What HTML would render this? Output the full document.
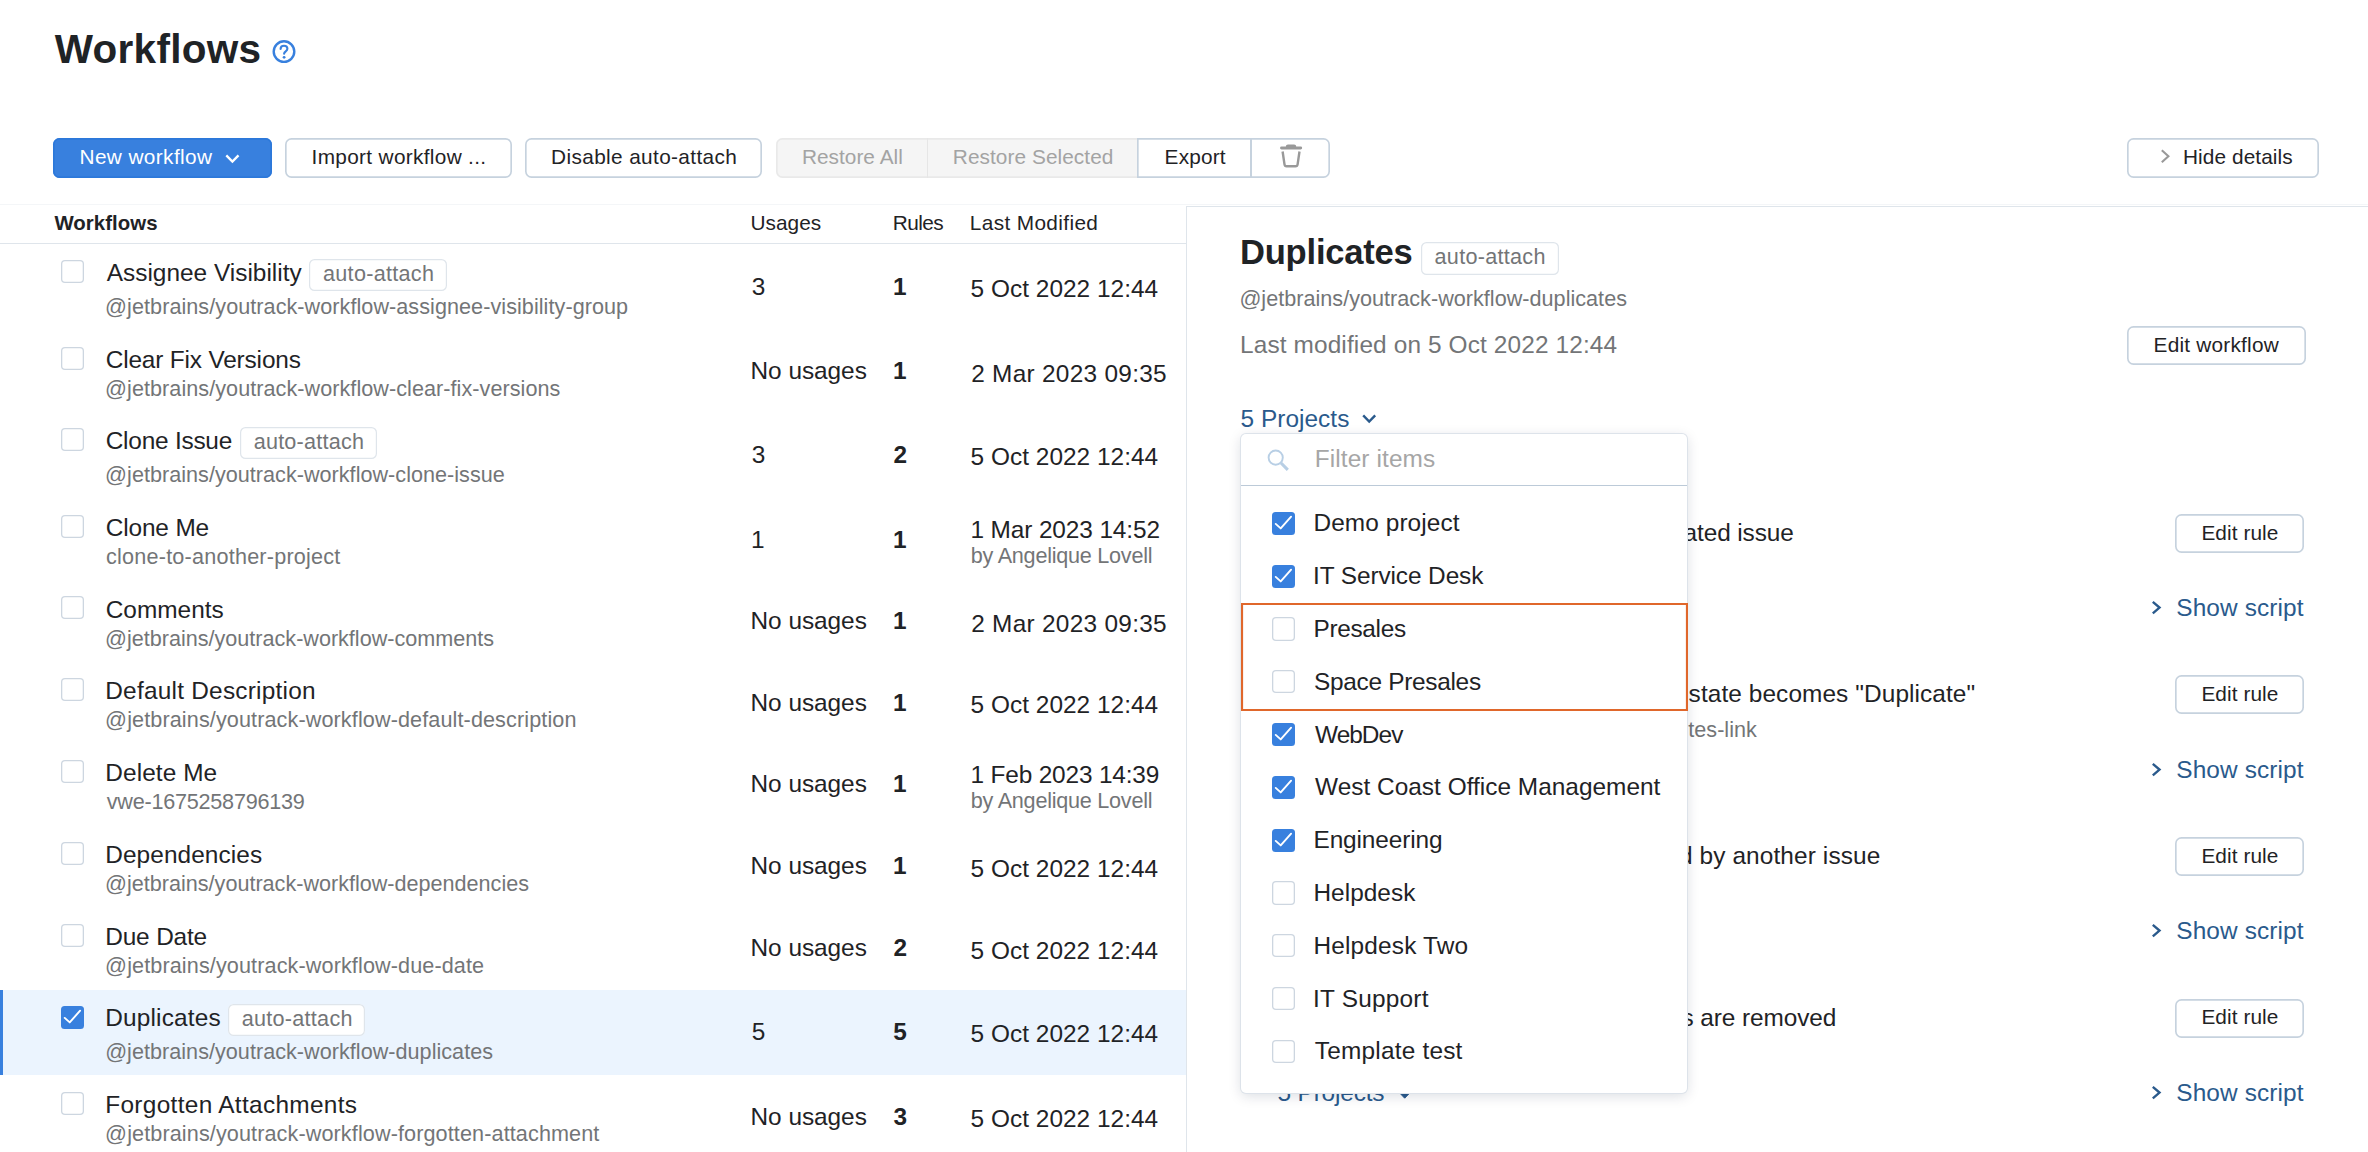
<!DOCTYPE html>
<html><head><meta charset="utf-8"><title>Workflows</title>
<style>
html,body{margin:0;padding:0;background:#fff;}
body{width:2368px;height:1152px;overflow:hidden;position:relative;font-family:"Liberation Sans",sans-serif;}
.t{position:absolute;white-space:nowrap;display:block;}
.b{position:absolute;box-sizing:border-box;display:block;}
</style></head><body>
<span class="t" style="left:54.74px;top:24px;font-size:40.5px;line-height:50px;color:#1f2326;font-weight:bold;letter-spacing:0.291px;">Workflows</span>
<svg class="b" style="left:270.00px;top:38.00px;" width="28" height="28" viewBox="0 0 28 28"><circle cx="14" cy="13.6" r="10.3" fill="none" stroke="#3880de" stroke-width="2.4"/><path d="M10.6 10.9c0-2 1.5-3.2 3.4-3.2s3.4 1.2 3.4 3c0 2.6-3.3 2.6-3.3 5.1" fill="none" stroke="#3880de" stroke-width="2.1" stroke-linecap="round"/><circle cx="14.1" cy="19.3" r="1.4" fill="#3880de"/></svg>
<div class="b" style="left:53.00px;top:138.00px;width:219.00px;height:39.80px;border-radius:6.5px;background:#3880de;box-shadow:inset 0 0 0 1.67px #2c78da;"></div>
<span class="t" style="left:79.48px;top:143px;font-size:20.8px;line-height:27px;color:#fff;letter-spacing:0.392px;">New workflow</span>
<svg class="b" style="left:222.00px;top:150.00px;" width="20" height="16" viewBox="0 0 20 16"><path d="M4.3 5.4l6.1 6.2 6.1-6.2" fill="none" stroke="#fff" stroke-width="2.3"/></svg>
<div class="b" style="left:285.40px;top:138.00px;width:226.30px;height:39.80px;border-radius:6.5px;background:#fff;box-shadow:inset 0 0 0 1.67px #c6d2de;"></div>
<span class="t" style="left:311.60px;top:143px;font-size:20.8px;line-height:27px;color:#1f2326;letter-spacing:0.319px;">Import workflow ...</span>
<div class="b" style="left:525.20px;top:138.00px;width:236.60px;height:39.80px;border-radius:6.5px;background:#fff;box-shadow:inset 0 0 0 1.67px #c6d2de;"></div>
<span class="t" style="left:551.12px;top:143px;font-size:20.8px;line-height:27px;color:#1f2326;letter-spacing:0.361px;">Disable auto-attach</span>
<div class="b" style="left:776.00px;top:138.00px;width:362.50px;height:39.80px;border-radius:6.5px 0 0 6.5px;background:#f5f5f5;box-shadow:inset 0 0 0 1.67px #e9e9e9;"></div>
<div class="b" style="left:926.60px;top:138.00px;width:1.67px;height:39.80px;background:#e6e6e6;"></div>
<span class="t" style="left:801.92px;top:143px;font-size:20.8px;line-height:27px;color:#a3a3a3;letter-spacing:0.035px;">Restore All</span>
<span class="t" style="left:952.82px;top:143px;font-size:20.8px;line-height:27px;color:#a3a3a3;letter-spacing:0.066px;">Restore Selected</span>
<div class="b" style="left:1137.40px;top:138.00px;width:192.60px;height:39.80px;border-radius:0 6.5px 6.5px 0;background:#fff;box-shadow:inset 0 0 0 1.67px #c6d2de;"></div>
<div class="b" style="left:1250.20px;top:138.00px;width:1.67px;height:39.80px;background:#c6d2de;"></div>
<span class="t" style="left:1164.60px;top:143px;font-size:20.8px;line-height:27px;color:#1f2326;letter-spacing:0.172px;">Export</span>
<svg class="b" style="left:1276.00px;top:142.00px;" width="30" height="28" viewBox="0 0 30 28"><path d="M5.5 4.5h19.2a1.2 1.2 0 0 1 0 2.9H5.5a1.2 1.2 0 0 1 0-2.9zM9.8 4.9c.2-1.6.9-2.3 2.2-2.3h6.1c1.3 0 2 .7 2.2 2.3z" fill="#999"/><path d="M6.6 9.5l1.9 12.9c.2 1.4.9 1.9 2.1 1.9h8.9c1.2 0 1.9-.5 2.1-1.9l1.9-12.9" fill="none" stroke="#999" stroke-width="2.4" stroke-linejoin="round"/></svg>
<div class="b" style="left:2127.20px;top:138.00px;width:191.50px;height:39.80px;border-radius:6.5px;background:#fff;box-shadow:inset 0 0 0 1.67px #c6d2de;"></div>
<svg class="b" style="left:2156.00px;top:146.00px;" width="18" height="20" viewBox="0 0 18 20"><path d="M5.8 4.3l6.6 6-6.6 6" fill="none" stroke="#999" stroke-width="2.1"/></svg>
<span class="t" style="left:2182.94px;top:143px;font-size:20.8px;line-height:27px;color:#1f2326;letter-spacing:0.101px;">Hide details</span>
<div class="b" style="left:0.00px;top:204.00px;width:2368.00px;height:1.00px;background:#f4f6f8;"></div>
<span class="t" style="left:54.46px;top:210px;font-size:20.4px;line-height:26px;color:#1f2326;font-weight:bold;letter-spacing:0.040px;">Workflows</span>
<span class="t" style="left:750.54px;top:209px;font-size:20.8px;line-height:27px;color:#1f2326;letter-spacing:0.014px;">Usages</span>
<span class="t" style="left:892.77px;top:209px;font-size:20.8px;line-height:27px;color:#1f2326;letter-spacing:-0.598px;">Rules</span>
<span class="t" style="left:969.77px;top:209px;font-size:20.8px;line-height:27px;color:#1f2326;letter-spacing:0.371px;">Last Modified</span>
<div class="b" style="left:0.00px;top:243.00px;width:1186.50px;height:1.00px;background:#dfe5eb;"></div>
<div class="b" style="left:61.00px;top:260.00px;width:23.00px;height:22.60px;border-radius:4px;background:#fff;box-shadow:inset 0 0 0 1.3px #cdd6e0;"></div>
<span class="t" style="left:106.73px;top:257px;font-size:24.4px;line-height:31px;color:#1f2326;letter-spacing:0.011px;">Assignee Visibility</span>
<div class="b" style="left:309.40px;top:259.00px;width:137.30px;height:32.30px;border-radius:5.5px;background:#fff;box-shadow:inset 0 0 0 1.2px #dfe5eb;"></div>
<span class="t" style="left:323.01px;top:259px;font-size:21.6px;line-height:29px;color:#737577;letter-spacing:0.288px;">auto-attach</span>
<span class="t" style="left:105.12px;top:292px;font-size:21.6px;line-height:29px;color:#737577;letter-spacing:0.057px;">@jetbrains/youtrack-workflow-assignee-visibility-group</span>
<span class="t" style="left:751.75px;top:271px;font-size:24.4px;line-height:31px;color:#1f2326;">3</span>
<span class="t" style="left:892.89px;top:271px;font-size:24.4px;line-height:31px;color:#1f2326;font-weight:bold;">1</span>
<span class="t" style="left:970.57px;top:273px;font-size:24.4px;line-height:31px;color:#1f2326;letter-spacing:0.027px;">5 Oct 2022 12:44</span>
<div class="b" style="left:61.00px;top:347.00px;width:23.00px;height:22.60px;border-radius:4px;background:#fff;box-shadow:inset 0 0 0 1.3px #cdd6e0;"></div>
<span class="t" style="left:105.73px;top:344px;font-size:24.4px;line-height:31px;color:#1f2326;letter-spacing:-0.161px;">Clear Fix Versions</span>
<span class="t" style="left:105.12px;top:374px;font-size:21.6px;line-height:29px;color:#737577;letter-spacing:0.055px;">@jetbrains/youtrack-workflow-clear-fix-versions</span>
<span class="t" style="left:750.55px;top:355px;font-size:24.4px;line-height:31px;color:#1f2326;letter-spacing:-0.040px;">No usages</span>
<span class="t" style="left:892.89px;top:355px;font-size:24.4px;line-height:31px;color:#1f2326;font-weight:bold;">1</span>
<span class="t" style="left:971.16px;top:358px;font-size:24.4px;line-height:31px;color:#1f2326;letter-spacing:0.289px;">2 Mar 2023 09:35</span>
<div class="b" style="left:61.00px;top:428.00px;width:23.00px;height:22.60px;border-radius:4px;background:#fff;box-shadow:inset 0 0 0 1.3px #cdd6e0;"></div>
<span class="t" style="left:105.73px;top:425px;font-size:24.4px;line-height:31px;color:#1f2326;letter-spacing:-0.224px;">Clone Issue</span>
<div class="b" style="left:239.70px;top:427.00px;width:137.30px;height:32.30px;border-radius:5.5px;background:#fff;box-shadow:inset 0 0 0 1.2px #dfe5eb;"></div>
<span class="t" style="left:253.65px;top:427px;font-size:21.6px;line-height:29px;color:#737577;letter-spacing:0.238px;">auto-attach</span>
<span class="t" style="left:105.12px;top:460px;font-size:21.6px;line-height:29px;color:#737577;letter-spacing:0.024px;">@jetbrains/youtrack-workflow-clone-issue</span>
<span class="t" style="left:751.75px;top:439px;font-size:24.4px;line-height:31px;color:#1f2326;">3</span>
<span class="t" style="left:893.48px;top:439px;font-size:24.4px;line-height:31px;color:#1f2326;font-weight:bold;">2</span>
<span class="t" style="left:970.57px;top:441px;font-size:24.4px;line-height:31px;color:#1f2326;letter-spacing:0.027px;">5 Oct 2022 12:44</span>
<div class="b" style="left:61.00px;top:515.00px;width:23.00px;height:22.60px;border-radius:4px;background:#fff;box-shadow:inset 0 0 0 1.3px #cdd6e0;"></div>
<span class="t" style="left:105.73px;top:512px;font-size:24.4px;line-height:31px;color:#1f2326;letter-spacing:-0.132px;">Clone Me</span>
<span class="t" style="left:106.01px;top:542px;font-size:21.6px;line-height:29px;color:#737577;letter-spacing:0.220px;">clone-to-another-project</span>
<span class="t" style="left:750.99px;top:524px;font-size:24.4px;line-height:31px;color:#1f2326;">1</span>
<span class="t" style="left:892.89px;top:524px;font-size:24.4px;line-height:31px;color:#1f2326;font-weight:bold;">1</span>
<span class="t" style="left:970.47px;top:514px;font-size:24.4px;line-height:31px;color:#1f2326;letter-spacing:-0.112px;">1 Mar 2023 14:52</span>
<span class="t" style="left:970.83px;top:541px;font-size:21.6px;line-height:29px;color:#737577;letter-spacing:-0.246px;">by Angelique Lovell</span>
<div class="b" style="left:61.00px;top:596.00px;width:23.00px;height:22.60px;border-radius:4px;background:#fff;box-shadow:inset 0 0 0 1.3px #cdd6e0;"></div>
<span class="t" style="left:105.73px;top:594px;font-size:24.4px;line-height:31px;color:#1f2326;letter-spacing:0.023px;">Comments</span>
<span class="t" style="left:105.12px;top:624px;font-size:21.6px;line-height:29px;color:#737577;letter-spacing:-0.007px;">@jetbrains/youtrack-workflow-comments</span>
<span class="t" style="left:750.55px;top:605px;font-size:24.4px;line-height:31px;color:#1f2326;letter-spacing:-0.040px;">No usages</span>
<span class="t" style="left:892.89px;top:605px;font-size:24.4px;line-height:31px;color:#1f2326;font-weight:bold;">1</span>
<span class="t" style="left:971.16px;top:608px;font-size:24.4px;line-height:31px;color:#1f2326;letter-spacing:0.289px;">2 Mar 2023 09:35</span>
<div class="b" style="left:61.00px;top:678.00px;width:23.00px;height:22.60px;border-radius:4px;background:#fff;box-shadow:inset 0 0 0 1.3px #cdd6e0;"></div>
<span class="t" style="left:105.28px;top:675px;font-size:24.4px;line-height:31px;color:#1f2326;letter-spacing:0.238px;">Default Description</span>
<span class="t" style="left:105.12px;top:705px;font-size:21.6px;line-height:29px;color:#737577;letter-spacing:0.114px;">@jetbrains/youtrack-workflow-default-description</span>
<span class="t" style="left:750.55px;top:687px;font-size:24.4px;line-height:31px;color:#1f2326;letter-spacing:-0.040px;">No usages</span>
<span class="t" style="left:892.89px;top:687px;font-size:24.4px;line-height:31px;color:#1f2326;font-weight:bold;">1</span>
<span class="t" style="left:970.57px;top:689px;font-size:24.4px;line-height:31px;color:#1f2326;letter-spacing:0.027px;">5 Oct 2022 12:44</span>
<div class="b" style="left:61.00px;top:760.00px;width:23.00px;height:22.60px;border-radius:4px;background:#fff;box-shadow:inset 0 0 0 1.3px #cdd6e0;"></div>
<span class="t" style="left:105.28px;top:757px;font-size:24.4px;line-height:31px;color:#1f2326;letter-spacing:0.095px;">Delete Me</span>
<span class="t" style="left:106.76px;top:787px;font-size:21.6px;line-height:29px;color:#737577;letter-spacing:-0.229px;">vwe-1675258796139</span>
<span class="t" style="left:750.55px;top:768px;font-size:24.4px;line-height:31px;color:#1f2326;letter-spacing:-0.040px;">No usages</span>
<span class="t" style="left:892.89px;top:768px;font-size:24.4px;line-height:31px;color:#1f2326;font-weight:bold;">1</span>
<span class="t" style="left:970.47px;top:759px;font-size:24.4px;line-height:31px;color:#1f2326;letter-spacing:-0.159px;">1 Feb 2023 14:39</span>
<span class="t" style="left:970.83px;top:786px;font-size:21.6px;line-height:29px;color:#737577;letter-spacing:-0.246px;">by Angelique Lovell</span>
<div class="b" style="left:61.00px;top:842.00px;width:23.00px;height:22.60px;border-radius:4px;background:#fff;box-shadow:inset 0 0 0 1.3px #cdd6e0;"></div>
<span class="t" style="left:105.28px;top:839px;font-size:24.4px;line-height:31px;color:#1f2326;letter-spacing:0.079px;">Dependencies</span>
<span class="t" style="left:105.11px;top:869px;font-size:21.6px;line-height:29px;color:#737577;letter-spacing:-0.003px;">@jetbrains/youtrack-workflow-dependencies</span>
<span class="t" style="left:750.55px;top:850px;font-size:24.4px;line-height:31px;color:#1f2326;letter-spacing:-0.040px;">No usages</span>
<span class="t" style="left:892.89px;top:850px;font-size:24.4px;line-height:31px;color:#1f2326;font-weight:bold;">1</span>
<span class="t" style="left:970.57px;top:853px;font-size:24.4px;line-height:31px;color:#1f2326;letter-spacing:0.027px;">5 Oct 2022 12:44</span>
<div class="b" style="left:61.00px;top:924.00px;width:23.00px;height:22.60px;border-radius:4px;background:#fff;box-shadow:inset 0 0 0 1.3px #cdd6e0;"></div>
<span class="t" style="left:105.28px;top:921px;font-size:24.4px;line-height:31px;color:#1f2326;letter-spacing:-0.160px;">Due Date</span>
<span class="t" style="left:105.12px;top:951px;font-size:21.6px;line-height:29px;color:#737577;letter-spacing:0.117px;">@jetbrains/youtrack-workflow-due-date</span>
<span class="t" style="left:750.55px;top:932px;font-size:24.4px;line-height:31px;color:#1f2326;letter-spacing:-0.040px;">No usages</span>
<span class="t" style="left:893.48px;top:932px;font-size:24.4px;line-height:31px;color:#1f2326;font-weight:bold;">2</span>
<span class="t" style="left:970.57px;top:935px;font-size:24.4px;line-height:31px;color:#1f2326;letter-spacing:0.027px;">5 Oct 2022 12:44</span>
<div class="b" style="left:0.00px;top:990.00px;width:1186.50px;height:85.00px;background:#ebf4fe;"></div>
<div class="b" style="left:0.00px;top:990.00px;width:3.30px;height:85.00px;background:#3880de;"></div>
<div class="b" style="left:61.00px;top:1006.00px;width:23.00px;height:23.00px;border-radius:3.5px;background:#3880de;"><svg width="23" height="23" viewBox="0 0 23 23" style="display:block"><path d="M3.7 11.9l5 4.5L19.1 4.7" fill="none" stroke="#fff" stroke-width="1.9" stroke-linejoin="round" stroke-linecap="round"/></svg></div>
<span class="t" style="left:105.20px;top:1002px;font-size:24.4px;line-height:31px;color:#1f2326;letter-spacing:0.192px;">Duplicates</span>
<div class="b" style="left:227.80px;top:1004.00px;width:137.30px;height:32.30px;border-radius:5.5px;background:#fff;box-shadow:inset 0 0 0 1.2px #dfe5eb;"></div>
<span class="t" style="left:241.74px;top:1004px;font-size:21.6px;line-height:29px;color:#737577;letter-spacing:0.270px;">auto-attach</span>
<span class="t" style="left:105.13px;top:1037px;font-size:21.6px;line-height:29px;color:#737577;letter-spacing:0.030px;">@jetbrains/youtrack-workflow-duplicates</span>
<span class="t" style="left:751.73px;top:1016px;font-size:24.4px;line-height:31px;color:#1f2326;">5</span>
<span class="t" style="left:893.37px;top:1016px;font-size:24.4px;line-height:31px;color:#1f2326;font-weight:bold;">5</span>
<span class="t" style="left:970.59px;top:1018px;font-size:24.4px;line-height:31px;color:#1f2326;letter-spacing:0.027px;">5 Oct 2022 12:44</span>
<div class="b" style="left:61.00px;top:1092.00px;width:23.00px;height:22.60px;border-radius:4px;background:#fff;box-shadow:inset 0 0 0 1.3px #cdd6e0;"></div>
<span class="t" style="left:105.28px;top:1089px;font-size:24.4px;line-height:31px;color:#1f2326;letter-spacing:0.319px;">Forgotten Attachments</span>
<span class="t" style="left:105.12px;top:1119px;font-size:21.6px;line-height:29px;color:#737577;letter-spacing:0.114px;">@jetbrains/youtrack-workflow-forgotten-attachment</span>
<span class="t" style="left:750.55px;top:1101px;font-size:24.4px;line-height:31px;color:#1f2326;letter-spacing:-0.040px;">No usages</span>
<span class="t" style="left:893.47px;top:1101px;font-size:24.4px;line-height:31px;color:#1f2326;font-weight:bold;">3</span>
<span class="t" style="left:970.57px;top:1103px;font-size:24.4px;line-height:31px;color:#1f2326;letter-spacing:0.027px;">5 Oct 2022 12:44</span>
<div class="b" style="left:1186.00px;top:206.00px;width:1182.00px;height:1.00px;background:#dfe5eb;"></div>
<div class="b" style="left:1186.00px;top:206.00px;width:1.00px;height:946.00px;background:#dfe5eb;"></div>
<span class="t" style="left:1239.96px;top:231px;font-size:34.6px;line-height:42px;color:#1f2326;font-weight:bold;letter-spacing:-0.222px;">Duplicates</span>
<div class="b" style="left:1420.50px;top:242.30px;width:138.10px;height:32.30px;border-radius:5.5px;background:#fff;box-shadow:inset 0 0 0 1.2px #dfe5eb;"></div>
<span class="t" style="left:1434.59px;top:242px;font-size:21.6px;line-height:29px;color:#737577;letter-spacing:0.280px;">auto-attach</span>
<span class="t" style="left:1239.39px;top:284px;font-size:21.6px;line-height:29px;color:#737577;letter-spacing:0.022px;">@jetbrains/youtrack-workflow-duplicates</span>
<span class="t" style="left:1240.01px;top:329px;font-size:24.4px;line-height:31px;color:#737577;letter-spacing:0.131px;">Last modified on 5 Oct 2022 12:44</span>
<div class="b" style="left:2127.20px;top:326.20px;width:178.40px;height:39.00px;border-radius:6.5px;background:#fff;box-shadow:inset 0 0 0 1.67px #c6d2de;"></div>
<span class="t" style="left:2153.60px;top:331px;font-size:20.8px;line-height:27px;color:#1f2326;letter-spacing:0.215px;">Edit workflow</span>
<span class="t" style="left:1240.50px;top:403px;font-size:24.4px;line-height:31px;color:#2a5a8c;letter-spacing:0.047px;">5 Projects</span>
<svg class="b" style="left:1358.00px;top:410.00px;" width="24" height="18" viewBox="0 0 24 18"><path d="M5.2 5.3l6 6.2 6-6.2" fill="none" stroke="#2a5a8c" stroke-width="2.4"/></svg>
<span class="t" style="left:1671.50px;top:517px;font-size:24.4px;line-height:31px;color:#1f2326;letter-spacing:-0.110px;">cated issue</span>
<span class="t" style="left:1688.60px;top:678px;font-size:24.4px;line-height:31px;color:#1f2326;letter-spacing:0.091px;">state becomes "Duplicate"</span>
<span class="t" style="left:1688.30px;top:715px;font-size:21.6px;line-height:29px;color:#737577;letter-spacing:0.012px;">tes-link</span>
<span class="t" style="left:1679.00px;top:840px;font-size:24.4px;line-height:31px;color:#1f2326;letter-spacing:0.113px;">d by another issue</span>
<span class="t" style="left:1681.50px;top:1002px;font-size:24.4px;line-height:31px;color:#1f2326;letter-spacing:-0.092px;">s are removed</span>
<div class="b" style="left:2175.00px;top:514.00px;width:129.00px;height:39.00px;border-radius:6.5px;background:#fff;box-shadow:inset 0 0 0 1.67px #c6d2de;"></div>
<span class="t" style="left:2201.42px;top:519px;font-size:20.8px;line-height:27px;color:#1f2326;letter-spacing:0.074px;">Edit rule</span>
<svg class="b" style="left:2146.00px;top:596.00px;" width="20" height="24" viewBox="0 0 20 24"><path d="M6.8 5.9l6.7 5.7-6.7 5.7" fill="none" stroke="#2a5a8c" stroke-width="2.4"/></svg>
<span class="t" style="left:2176.25px;top:592px;font-size:24.4px;line-height:31px;color:#2a5a8c;letter-spacing:0.119px;">Show script</span>
<div class="b" style="left:2175.00px;top:675.00px;width:129.00px;height:39.00px;border-radius:6.5px;background:#fff;box-shadow:inset 0 0 0 1.67px #c6d2de;"></div>
<span class="t" style="left:2201.42px;top:680px;font-size:20.8px;line-height:27px;color:#1f2326;letter-spacing:0.074px;">Edit rule</span>
<svg class="b" style="left:2146.00px;top:757.50px;" width="20" height="24" viewBox="0 0 20 24"><path d="M6.8 5.9l6.7 5.7-6.7 5.7" fill="none" stroke="#2a5a8c" stroke-width="2.4"/></svg>
<span class="t" style="left:2176.25px;top:754px;font-size:24.4px;line-height:31px;color:#2a5a8c;letter-spacing:0.119px;">Show script</span>
<div class="b" style="left:2175.00px;top:837.00px;width:129.00px;height:38.50px;border-radius:6.5px;background:#fff;box-shadow:inset 0 0 0 1.67px #c6d2de;"></div>
<span class="t" style="left:2201.42px;top:842px;font-size:20.8px;line-height:27px;color:#1f2326;letter-spacing:0.074px;">Edit rule</span>
<svg class="b" style="left:2146.00px;top:919.00px;" width="20" height="24" viewBox="0 0 20 24"><path d="M6.8 5.9l6.7 5.7-6.7 5.7" fill="none" stroke="#2a5a8c" stroke-width="2.4"/></svg>
<span class="t" style="left:2176.25px;top:915px;font-size:24.4px;line-height:31px;color:#2a5a8c;letter-spacing:0.119px;">Show script</span>
<div class="b" style="left:2175.00px;top:999.00px;width:129.00px;height:38.50px;border-radius:6.5px;background:#fff;box-shadow:inset 0 0 0 1.67px #c6d2de;"></div>
<span class="t" style="left:2201.42px;top:1003px;font-size:20.8px;line-height:27px;color:#1f2326;letter-spacing:0.074px;">Edit rule</span>
<svg class="b" style="left:2146.00px;top:1081.00px;" width="20" height="24" viewBox="0 0 20 24"><path d="M6.8 5.9l6.7 5.7-6.7 5.7" fill="none" stroke="#2a5a8c" stroke-width="2.4"/></svg>
<span class="t" style="left:2176.25px;top:1077px;font-size:24.4px;line-height:31px;color:#2a5a8c;letter-spacing:0.119px;">Show script</span>
<span class="t" style="left:1277.50px;top:1077px;font-size:24.4px;line-height:31px;color:#2a5a8c;letter-spacing:-0.158px;">5 Projects</span>
<svg class="b" style="left:1394.00px;top:1088.00px;" width="22" height="16" viewBox="0 0 22 16"><path d="M5.5 4.8l5.2 5.4 5.2-5.4z" fill="#2a5a8c" stroke="#2a5a8c" stroke-width="1"/></svg>
<div class="b" style="left:1241.30px;top:434.10px;width:445.80px;height:658.70px;z-index:5;background:#fff;border-radius:5px;box-shadow:0 0 0 1px #dde3ea,0 3px 13px rgba(0,30,60,.15);"></div>
<svg class="b" style="left:1262.00px;top:444.00px;z-index:6;" width="34" height="34" viewBox="0 0 34 34"><circle cx="13.7" cy="13.6" r="7.1" fill="none" stroke="#b8cfe5" stroke-width="1.9"/><path d="M19 19l6.8 6.8" stroke="#b8cfe5" stroke-width="3.1"/></svg>
<span class="t" style="left:1314.70px;top:443px;font-size:24.4px;line-height:31px;color:#a6a6a6;letter-spacing:0.114px;z-index:6;">Filter items</span>
<div class="b" style="left:1241.30px;top:485.00px;width:445.80px;height:1.00px;z-index:6;background:#bccad8;"></div>
<div class="b" style="left:1272.00px;top:512.00px;width:23.00px;height:23.00px;border-radius:3.5px;background:#3880de;z-index:6;"><svg width="23" height="23" viewBox="0 0 23 23" style="display:block"><path d="M3.7 11.9l5 4.5L19.1 4.7" fill="none" stroke="#fff" stroke-width="1.9" stroke-linejoin="round" stroke-linecap="round"/></svg></div>
<span class="t" style="left:1313.48px;top:507px;font-size:24.4px;line-height:31px;color:#1f2326;letter-spacing:0.088px;z-index:6;">Demo project</span>
<div class="b" style="left:1272.00px;top:564.80px;width:23.00px;height:23.00px;border-radius:3.5px;background:#3880de;z-index:6;"><svg width="23" height="23" viewBox="0 0 23 23" style="display:block"><path d="M3.7 11.9l5 4.5L19.1 4.7" fill="none" stroke="#fff" stroke-width="1.9" stroke-linejoin="round" stroke-linecap="round"/></svg></div>
<span class="t" style="left:1313.05px;top:560px;font-size:24.4px;line-height:31px;color:#1f2326;letter-spacing:-0.095px;z-index:6;">IT Service Desk</span>
<div class="b" style="left:1272.00px;top:617.30px;width:23.00px;height:23.40px;border-radius:4px;background:#fff;box-shadow:inset 0 0 0 1.3px #cdd6e0;z-index:6;"></div>
<span class="t" style="left:1313.48px;top:613px;font-size:24.4px;line-height:31px;color:#1f2326;letter-spacing:-0.321px;z-index:6;">Presales</span>
<div class="b" style="left:1272.00px;top:670.10px;width:23.00px;height:23.40px;border-radius:4px;background:#fff;box-shadow:inset 0 0 0 1.3px #cdd6e0;z-index:6;"></div>
<span class="t" style="left:1313.93px;top:666px;font-size:24.4px;line-height:31px;color:#1f2326;letter-spacing:-0.283px;z-index:6;">Space Presales</span>
<div class="b" style="left:1272.00px;top:723.20px;width:23.00px;height:23.00px;border-radius:3.5px;background:#3880de;z-index:6;"><svg width="23" height="23" viewBox="0 0 23 23" style="display:block"><path d="M3.7 11.9l5 4.5L19.1 4.7" fill="none" stroke="#fff" stroke-width="1.9" stroke-linejoin="round" stroke-linecap="round"/></svg></div>
<span class="t" style="left:1315.04px;top:719px;font-size:24.4px;line-height:31px;color:#1f2326;letter-spacing:-0.959px;z-index:6;">WebDev</span>
<div class="b" style="left:1272.00px;top:776.00px;width:23.00px;height:23.00px;border-radius:3.5px;background:#3880de;z-index:6;"><svg width="23" height="23" viewBox="0 0 23 23" style="display:block"><path d="M3.7 11.9l5 4.5L19.1 4.7" fill="none" stroke="#fff" stroke-width="1.9" stroke-linejoin="round" stroke-linecap="round"/></svg></div>
<span class="t" style="left:1315.04px;top:771px;font-size:24.4px;line-height:31px;color:#1f2326;letter-spacing:0.020px;z-index:6;">West Coast Office Management</span>
<div class="b" style="left:1272.00px;top:828.80px;width:23.00px;height:23.00px;border-radius:3.5px;background:#3880de;z-index:6;"><svg width="23" height="23" viewBox="0 0 23 23" style="display:block"><path d="M3.7 11.9l5 4.5L19.1 4.7" fill="none" stroke="#fff" stroke-width="1.9" stroke-linejoin="round" stroke-linecap="round"/></svg></div>
<span class="t" style="left:1313.48px;top:824px;font-size:24.4px;line-height:31px;color:#1f2326;letter-spacing:-0.103px;z-index:6;">Engineering</span>
<div class="b" style="left:1272.00px;top:881.30px;width:23.00px;height:23.40px;border-radius:4px;background:#fff;box-shadow:inset 0 0 0 1.3px #cdd6e0;z-index:6;"></div>
<span class="t" style="left:1313.48px;top:877px;font-size:24.4px;line-height:31px;color:#1f2326;letter-spacing:0.031px;z-index:6;">Helpdesk</span>
<div class="b" style="left:1272.00px;top:934.10px;width:23.00px;height:23.40px;border-radius:4px;background:#fff;box-shadow:inset 0 0 0 1.3px #cdd6e0;z-index:6;"></div>
<span class="t" style="left:1313.48px;top:930px;font-size:24.4px;line-height:31px;color:#1f2326;letter-spacing:0.179px;z-index:6;">Helpdesk Two</span>
<div class="b" style="left:1272.00px;top:986.90px;width:23.00px;height:23.40px;border-radius:4px;background:#fff;box-shadow:inset 0 0 0 1.3px #cdd6e0;z-index:6;"></div>
<span class="t" style="left:1313.05px;top:983px;font-size:24.4px;line-height:31px;color:#1f2326;letter-spacing:0.214px;z-index:6;">IT Support</span>
<div class="b" style="left:1272.00px;top:1039.70px;width:23.00px;height:23.40px;border-radius:4px;background:#fff;box-shadow:inset 0 0 0 1.3px #cdd6e0;z-index:6;"></div>
<span class="t" style="left:1314.87px;top:1035px;font-size:24.4px;line-height:31px;color:#1f2326;letter-spacing:0.204px;z-index:6;">Template test</span>
<div class="b" style="left:1241.00px;top:603.00px;width:447.00px;height:107.50px;z-index:7;box-shadow:inset 0 0 0 2.1px #e0672b;"></div>
</body></html>
